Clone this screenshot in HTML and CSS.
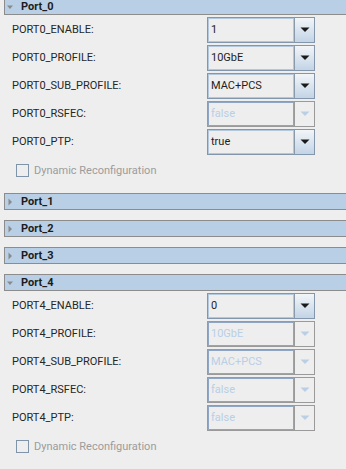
FILE: index.html
```html
<!DOCTYPE html>
<html lang="en">
  <head>
    <meta charset="UTF-8" />
    <title>Ports</title>
    <link rel="stylesheet" href="styles.css">
  </head>
  <body>
    <!-- Port_0 -->
    <div class="panel first">
      <div class="panel-head"><svg class="caret" viewBox="0 0 8 8"><path d="M1 2.5h6L4 6z"/></svg>Port_0</div>
      <div class="panel-body">
        <div class="field">
          <span class="label">PORT0_ENABLE:</span>
          <div class="combo"><span class="value">1</span><span class="btn"><svg viewBox="0 0 10 6"><path d="M0.5 0.5h9L5 5z"/></svg></span></div>
        </div>
        <div class="field">
          <span class="label">PORT0_PROFILE:</span>
          <div class="combo"><span class="value">10GbE</span><span class="btn"><svg viewBox="0 0 10 6"><path d="M0.5 0.5h9L5 5z"/></svg></span></div>
        </div>
        <div class="field">
          <span class="label">PORT0_SUB_PROFILE:</span>
          <div class="combo"><span class="value">MAC+PCS</span><span class="btn"><svg viewBox="0 0 10 6"><path d="M0.5 0.5h9L5 5z"/></svg></span></div>
        </div>
        <div class="field">
          <span class="label">PORT0_RSFEC:</span>
          <div class="combo disabled"><span class="value">false</span><span class="btn"><svg viewBox="0 0 10 6"><path d="M0.5 0.5h9L5 5z"/></svg></span></div>
        </div>
        <div class="field">
          <span class="label">PORT0_PTP:</span>
          <div class="combo"><span class="value">true</span><span class="btn"><svg viewBox="0 0 10 6"><path d="M0.5 0.5h9L5 5z"/></svg></span></div>
        </div>
        <div class="check"><span class="box"></span>Dynamic Reconfiguration</div>
      </div>
    </div>

    <div class="panel">
      <div class="panel-head"><svg class="caret" viewBox="0 0 8 8"><path d="M2.5 0.5v7L6 4z"/></svg>Port_1</div>
    </div>
    <div class="panel">
      <div class="panel-head"><svg class="caret" viewBox="0 0 8 8"><path d="M2.5 0.5v7L6 4z"/></svg>Port_2</div>
    </div>
    <div class="panel">
      <div class="panel-head"><svg class="caret" viewBox="0 0 8 8"><path d="M2.5 0.5v7L6 4z"/></svg>Port_3</div>
    </div>

    <!-- Port_4 -->
    <div class="panel">
      <div class="panel-head"><svg class="caret" viewBox="0 0 8 8"><path d="M1 2.5h6L4 6z"/></svg>Port_4</div>
      <div class="panel-body">
        <div class="field">
          <span class="label">PORT4_ENABLE:</span>
          <div class="combo"><span class="value">0</span><span class="btn"><svg viewBox="0 0 10 6"><path d="M0.5 0.5h9L5 5z"/></svg></span></div>
        </div>
        <div class="field">
          <span class="label">PORT4_PROFILE:</span>
          <div class="combo disabled"><span class="value">10GbE</span><span class="btn"><svg viewBox="0 0 10 6"><path d="M0.5 0.5h9L5 5z"/></svg></span></div>
        </div>
        <div class="field">
          <span class="label">PORT4_SUB_PROFILE:</span>
          <div class="combo disabled"><span class="value">MAC+PCS</span><span class="btn"><svg viewBox="0 0 10 6"><path d="M0.5 0.5h9L5 5z"/></svg></span></div>
        </div>
        <div class="field">
          <span class="label">PORT4_RSFEC:</span>
          <div class="combo disabled"><span class="value">false</span><span class="btn"><svg viewBox="0 0 10 6"><path d="M0.5 0.5h9L5 5z"/></svg></span></div>
        </div>
        <div class="field">
          <span class="label">PORT4_PTP:</span>
          <div class="combo disabled"><span class="value">false</span><span class="btn"><svg viewBox="0 0 10 6"><path d="M0.5 0.5h9L5 5z"/></svg></span></div>
        </div>
        <div class="check"><span class="box"></span>Dynamic Reconfiguration</div>
      </div>
    </div>
  </body>
</html>
```

FILE: styles.css
```css
body {
  margin: 0;
  background: #eeeeee;
  font-family: Roboto, "Liberation Sans", sans-serif;
  font-size: 11px;
  color: #262626;
  overflow: hidden;
}

/* Панели портов */
.panel {
  margin: 0 -4px 10px 4px;
}

.panel.first {
  margin-top: -2px;
}

.panel-head {
  display: flex;
  align-items: center;
  height: 15px;
  border: 1px solid #8c8c8c;
  background: #b8cfe5;
  font-weight: bold;
  color: #1c1c1c;
}

.caret {
  width: 8px;
  height: 8px;
  margin: 0 7px 0 1px;
  fill: #8a8a8a;
}

.panel-body {
  padding: 2px 0 0 8px;
}

/* Строки с полями */
.field {
  display: grid;
  grid-template-columns: 195px 108px;
  align-items: start;
  height: 28px;
}

.label {
  line-height: 26px;
}

/* Выпадающий список */
.combo {
  display: flex;
  height: 26px;
  box-sizing: border-box;
  border: 1px solid #8396ab;
}

.combo .value {
  flex: 1;
  line-height: 22px;
  padding-left: 2px;
  border: 1px solid #b4c8dd;
  color: #1e1e1e;
}

.combo .btn {
  display: flex;
  align-items: center;
  justify-content: center;
  width: 19px;
  border-left: 1px solid #8a9aab;
  background: linear-gradient(#f2f5f8, #c3d4e6);
}

.combo .btn svg {
  width: 10px;
  height: 6px;
  fill: #1a1a1a;
}

.combo.disabled {
  border-color: #9a9a9a;
}

.combo.disabled .value {
  color: #b8cfe6;
  border-color: #8ea6c4;
}

.combo.disabled .btn {
  background: #eeeeee;
  border-left-color: #9a9a9a;
}

.combo.disabled .btn svg {
  fill: #b8cfe6;
}

/* Чекбокс */
.check {
  display: flex;
  align-items: center;
  height: 26px;
  padding-left: 4px;
  color: #9c9c9c;
}

.check .box {
  width: 11px;
  height: 11px;
  border: 1px solid #7f93a9;
  margin-right: 5px;
}
```
